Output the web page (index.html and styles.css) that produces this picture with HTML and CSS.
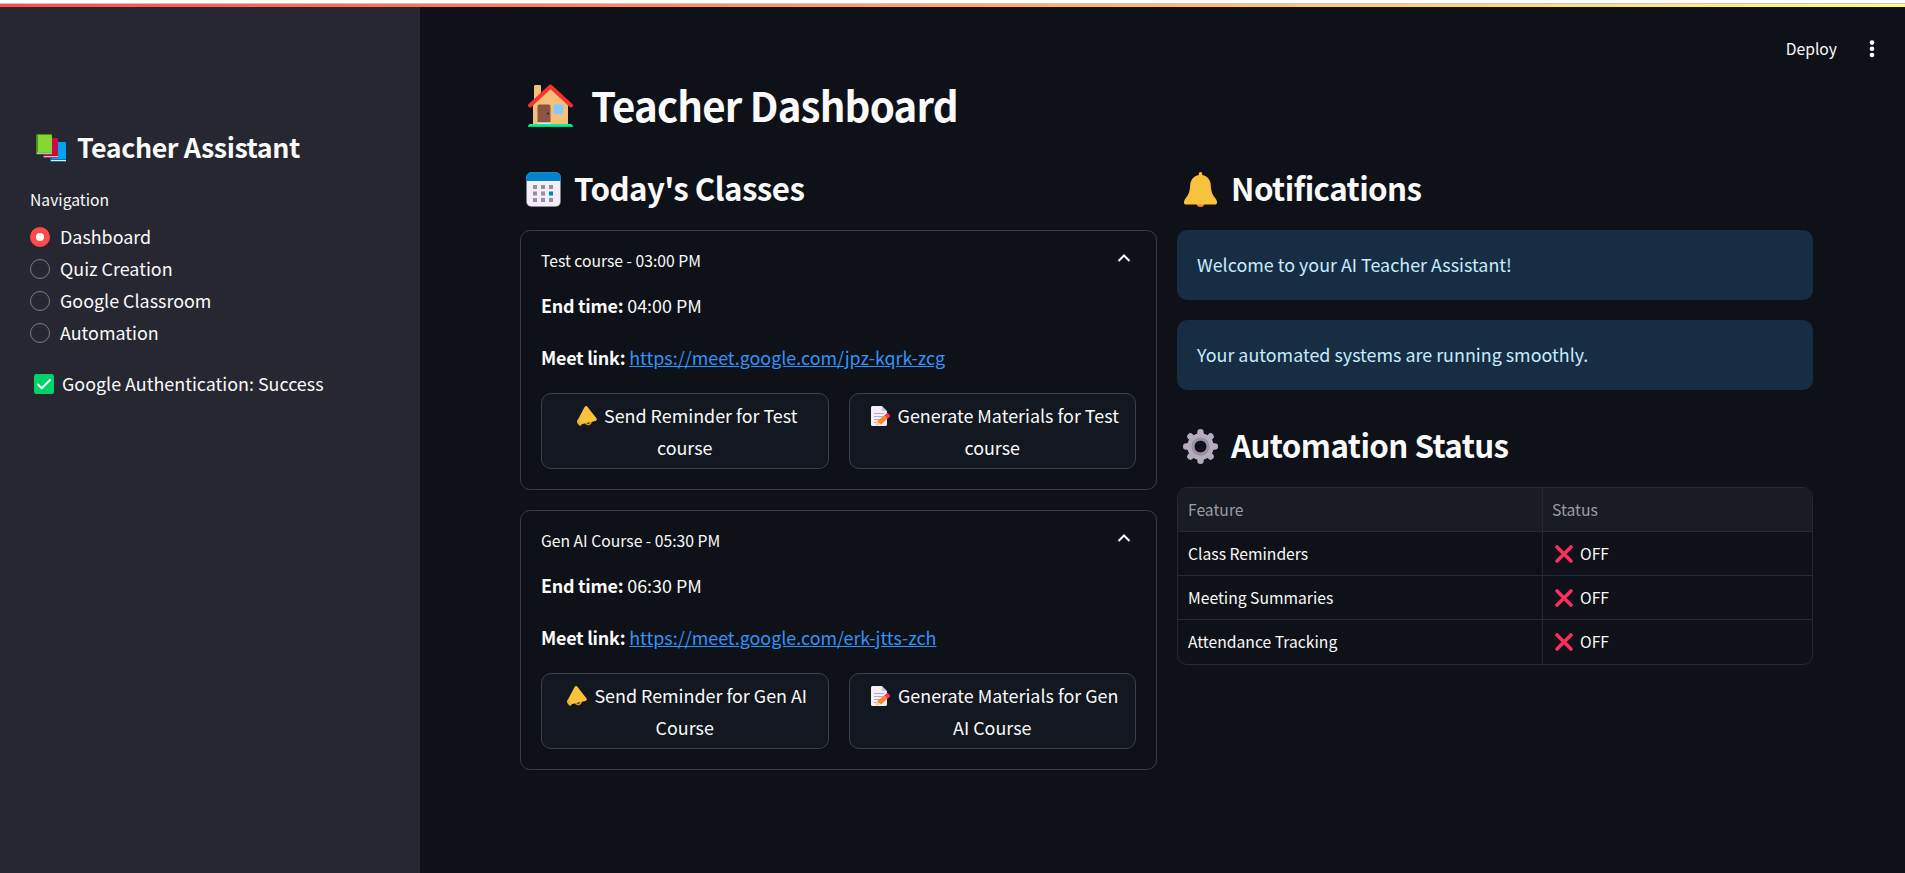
FILE: index.html
```html
<!DOCTYPE html>
<html lang="en">
<head>
<meta charset="utf-8">
<title>Teacher Dashboard</title>
<link rel="stylesheet" href="styles.css">
</head>
<body>
<svg width="0" height="0" class="defs" aria-hidden="true">
  <symbol id="megaphone" viewBox="0 0 20 20">
    <path d="M8.500 16.500c.8 2.600 3.600 2.500 4.800.9 1.100-1.500 1.300-2.800.4-3.900" fill="none" stroke="#d99a1e" stroke-width="1.700"/>
    <path d="M7.700.8c.8-1.100 2.200-1 2.900.1l8.800 11.300c.9 1.200.3 2.500-1.100 2.800L4.300 18.300.9 13.700z" fill="#f9c23c"/>
    <path d="M1 13.200l3.800 5.300c-.8 1.500-2.300 1.500-3 .5L.5 17.200c-.8-1.300-.6-3 .5-4z" fill="#f0b232"/>
  </symbol>
  <symbol id="memo" viewBox="0 0 20 20">
    <path d="M1.500 0h9.300L16 5.200V18.500a1.500 1.500 0 0 1-1.500 1.500h-13A1.500 1.500 0 0 1 0 18.500v-17A1.500 1.500 0 0 1 1.500 0z" fill="#f3eef8"/>
    <path d="M10.800 0 16 5.200h-3.700a1.500 1.500 0 0 1-1.500-1.500z" fill="#cdc4d6"/>
    <path d="M3 7.500h10M3 10.500h10M3 13.500h6M3 16.500h3" stroke="#b4acbc" stroke-width="1"/>
    <path d="M13.500 9.300l3.200 3.300-6.700 6-4-3.300z" fill="#ff822d"/>
    <path d="M13.500 9.300l2-1.900c.6-.6 1.300-.5 1.800 0l1.500 1.600c.5.600.5 1.200 0 1.700l-2.100 1.900z" fill="#f92f60"/>
    <path d="M5.700 15l3.500 3.500-4.500 1z" fill="#ffce7c"/>
  </symbol>
  <symbol id="cross" viewBox="0 0 18 18">
    <path d="M2 2l14 14M16 2L2 16" stroke="#f92f60" stroke-width="3.600" stroke-linecap="round"/>
  </symbol>
  <symbol id="chevron" viewBox="0 0 14 10">
    <path d="M1.500 8 7 2.500 12.500 8" fill="none" stroke="#fafafa" stroke-width="2.100"/>
  </symbol>
</svg>

<div class="strip"></div>
<div class="app">
  <aside class="sidebar">
    <h2 class="brand">
      <svg class="brand-icon" viewBox="0 0 30 28">
        <path d="M16 8h12.500c1 0 1.500.5 1.500 1.500V28H15.500c-1 0-1.500-.7-1.500-1.500z" fill="#0074ba"/>
        <path d="M17 8h11.500c1 0 1.500.5 1.500 1.500V25H16z" fill="#00a6ed"/>
        <path d="M15 26h15v1H15z" fill="#f3eef8"/>
        <path d="M8 4h12.500c1 0 1.500.5 1.500 1.500V24H8z" fill="#990838"/>
        <path d="M9 4h11.500c1 0 1.500.5 1.500 1.500V21.500H8z" fill="#ca0b4a"/>
        <path d="M7.500 22.200H22v1H7.500z" fill="#f3eef8"/>
        <path d="M1.500 0H14.500c1 0 1.500.5 1.500 1.500V20.500H1.500C.5 20.500 0 20 0 19V1.500C0 .5.500 0 1.500 0z" fill="#44911b"/>
        <path d="M2 1h12.500c1 0 1.500.3 1.500 1V18H2z" fill="#86d72f"/>
        <path d="M1 18.600h15v1H1z" fill="#f3eef8"/>
      </svg>
      <span>Teacher Assistant</span>
    </h2>
    <div class="nav-label">Navigation</div>
    <nav class="nav">
      <a class="option"><i class="radio on"></i><span>Dashboard</span></a>
      <a class="option"><i class="radio"></i><span>Quiz Creation</span></a>
      <a class="option"><i class="radio"></i><span>Google Classroom</span></a>
      <a class="option"><i class="radio"></i><span>Automation</span></a>
    </nav>
    <p class="auth">
      <svg class="check" viewBox="0 0 20 20"><rect width="20" height="20" rx="2.500" fill="#00d26a"/><path d="M4 10.500l3.700 3.700L16 6" fill="none" stroke="#fff" stroke-width="2" stroke-linecap="round" stroke-linejoin="round"/></svg>
      <span>Google Authentication: Success</span>
    </p>
  </aside>

  <main class="main">
    <header class="toolbar">
      <span>Deploy</span>
      <svg class="dots" viewBox="0 0 6 18"><circle cx="3" cy="2.600" r="2.300"/><circle cx="3" cy="8.800" r="2.300"/><circle cx="3" cy="15" r="2.300"/></svg>
    </header>

    <h1 class="title">
      <svg class="house" viewBox="0 0 45 44">
        <path d="M7 1.500h5.500V14H7z" fill="#e7ad6a"/>
        <path d="M6 2.500C6 1.500 6.500 1 7.500 1H12c.7 0 1 .5 1 1.500V18H6z" fill="#f3c07b"/>
        <path d="M22.500 4 40 20.500V41H5V20.500z" fill="#f3c07b"/>
        <path d="M9.500 22.500c0-1.300.7-2 2-2h9c1.300 0 2 .7 2 2V38.500h-13z" fill="#8c5543"/>
        <path d="M9 38.500h14V40H9z" fill="#e6e0e6"/>
        <circle cx="20" cy="29.500" r="1" fill="#321b41"/>
        <rect x="25.500" y="20.500" width="9.500" height="9.500" rx="1" fill="#83cbff"/>
        <path d="M2 21.500 22.500 2.500 43 21.500" fill="none" stroke="#f92f30" stroke-width="3.800" stroke-linecap="round" stroke-linejoin="round"/>
        <path d="M2.500 40H42.500c1.300 0 2.500 1.300 2.500 3H0c0-1.700 1.200-3 2.500-3z" fill="#00f397"/>
        <path d="M0 42h45v1H0z" fill="#00d26a"/>
      </svg>
      <span>Teacher Dashboard</span>
    </h1>

    <div class="columns">
      <section class="column">
        <h2 class="heading">
          <svg class="h-icon" viewBox="0 0 35 35">
            <rect x=".3" y=".3" width="34.400" height="34.400" rx="5" fill="#b4acbc"/>
            <path d="M1 8.500h33V29.500a4.500 4.500 0 0 1-4.500 4.500h-24A4.500 4.500 0 0 1 1 29.500z" fill="#f3eef8"/>
            <path d="M.3 9V5.300a5 5 0 0 1 5-5h24.400a5 5 0 0 1 5 5V9z" fill="#0084ce"/>
            <path d="M7 13h4v4H7zm8 0h4v4h-4zm8 0h4v4h-4zM7 19.500h4v4H7zm8 0h4v4h-4zM7 26h4v4H7zm8 0h4v4h-4zm8 0h4v4h-4z" fill="#998ea4"/>
            <path d="M23 19.500h4v4h-4z" fill="#0084ce"/>
          </svg>
          <span>Today's Classes</span>
        </h2>
        <article class="card">
          <div class="summary"><span>Test course - 03:00 PM</span><svg class="chev"><use href="#chevron"/></svg></div>
          <p class="line"><b>End time:</b> 04:00 PM</p>
          <p class="line"><b>Meet link:</b> <a class="link">https://meet.google.com/jpz-kqrk-zcg</a></p>
          <div class="actions">
            <button class="btn"><svg class="emoji"><use href="#megaphone"/></svg>Send Reminder for Test<br>course</button>
            <button class="btn"><svg class="emoji"><use href="#memo"/></svg>Generate Materials for Test<br>course</button>
          </div>
        </article>
        <article class="card">
          <div class="summary"><span>Gen AI Course - 05:30 PM</span><svg class="chev"><use href="#chevron"/></svg></div>
          <p class="line"><b>End time:</b> 06:30 PM</p>
          <p class="line"><b>Meet link:</b> <a class="link">https://meet.google.com/erk-jtts-zch</a></p>
          <div class="actions">
            <button class="btn"><svg class="emoji"><use href="#megaphone"/></svg>Send Reminder for Gen AI<br>Course</button>
            <button class="btn"><svg class="emoji"><use href="#memo"/></svg>Generate Materials for Gen<br>AI Course</button>
          </div>
        </article>
      </section>

      <section class="column">
        <h2 class="heading">
          <svg class="h-icon" viewBox="0 0 35 35">
            <circle cx="17.500" cy="31" r="4" fill="#ff822d"/>
            <path d="M17.500 0c1 0 1.700.8 1.700 1.700V3c5.200 1 8.300 5 8.600 10 .3 5.500 1 9 4.700 13.500 1 1.200 1.500 2.500 1.500 4 0 1.500-.8 2-2 2H3c-1.200 0-2-.5-2-2 0-1.500.5-2.800 1.500-4C6.200 22 6.900 18.500 7.200 13c.3-5 3.400-9 8.600-10V1.700C15.800.8 16.500 0 17.500 0z" fill="#f9c23c"/>
          </svg>
          <span>Notifications</span>
        </h2>
        <div class="alert">Welcome to your AI Teacher Assistant!</div>
        <div class="alert">Your automated systems are running smoothly.</div>
        <h2 class="heading status-heading">
          <svg class="h-icon" viewBox="-17.500 -17.500 35 35">
            <g stroke="#b4acbc" stroke-width="6.400" stroke-linecap="round">
              <path d="M0-14.300V-10M0 14.300V10M-14.300 0H-10M14.300 0H10M-10.100-10.100-8-8M10.100 10.100 8 8M-10.100 10.100-8 8M10.100-10.100 8-8"/>
            </g>
            <circle r="9.800" fill="none" stroke="#b4acbc" stroke-width="7"/>
            <circle r="7.600" fill="none" stroke="#998ea4" stroke-width="3"/>
          </svg>
          <span>Automation Status</span>
        </h2>
        <div class="table">
          <div class="row head"><div>Feature</div><div>Status</div></div>
          <div class="row"><div>Class Reminders</div><div><svg class="x"><use href="#cross"/></svg>OFF</div></div>
          <div class="row"><div>Meeting Summaries</div><div><svg class="x"><use href="#cross"/></svg>OFF</div></div>
          <div class="row"><div>Attendance Tracking</div><div><svg class="x"><use href="#cross"/></svg>OFF</div></div>
        </div>
      </section>
    </div>
  </main>
</div>
</body>
</html>
```
FILE: styles.css
```css
* { box-sizing: border-box; }
body {
  margin: 0;
  height: 873px;
  overflow: hidden;
  background: #fff;
  color: #fafafa;
  font-family: "Noto Sans CJK SC", "Noto Sans", sans-serif;
  font-size: 17.9px;
  line-height: 32px;
}
h1, h2, p { margin: 0; }
h1, h2 { letter-spacing: -0.018em; }
svg { display: block; flex: none; }
.defs { position: absolute; }

.strip {
  height: 7px;
  border-top: 3px solid #fff;
  background: linear-gradient(#c3c3cc 0 1px, transparent 1px), linear-gradient(90deg, #ff4b4b, #fffd80);
}
.app { display: flex; height: 866px; background: #0e1117; }

.sidebar { width: 420px; flex: none; background: #262730; padding: 123px 30px 0; }
.brand { display: flex; align-items: center; height: 36px; font-size: 26.8px; line-height: 36px; padding-left: 6px; gap: 11px; letter-spacing: -0.016em; }
.brand-icon { width: 30px; height: 28px; }
.brand span, .title span, .heading span { padding-bottom: 2px; }
.nav-label { margin-top: 20px; font-size: 15.7px; line-height: 28px; }
.nav { margin-top: 7px; }
.option { display: flex; align-items: center; gap: 10px; height: 32px; }
.option span, .auth span { padding-bottom: 2px; }
.radio { width: 20px; height: 20px; border: 1px solid #797a82; border-radius: 50%; }
.radio.on { border: 6px solid #ff4b4b; background: #fafafa; }
.auth { display: flex; align-items: center; height: 32px; margin-top: 19px; padding-left: 4px; gap: 8px; }
.check { width: 20px; height: 20px; }

.main { flex: 1; padding: 0 92px 0 100px; }
.toolbar { display: flex; justify-content: flex-end; align-items: center; gap: 32px; height: 75px; padding-top: 9px; margin-right: -62px; font-size: 15.7px; line-height: 28px; }
.dots { width: 6px; height: 18px; fill: #fafafa; }

.title { display: flex; align-items: center; height: 48px; gap: 18px; padding-left: 8px; font-size: 40.2px; line-height: 48px; letter-spacing: -0.02em; }
.house { width: 45px; height: 44px; }
.columns { display: grid; grid-template-columns: 637px 636px; gap: 20px; margin-top: 38px; }
.column { display: flex; flex-direction: column; }
.heading { display: flex; align-items: center; height: 42px; gap: 13px; padding-left: 6px; margin-bottom: 20px; font-size: 31.3px; line-height: 42px; }
.h-icon { width: 35px; height: 35px; }

.card { height: 260px; margin-bottom: 20px; padding: 0 20px; border: 1px solid #3a3c43; border-radius: 10px; }
.summary { display: flex; justify-content: space-between; align-items: center; height: 58px; font-size: 15.7px; padding: 1px 5px 0 0; }
.chev { width: 14px; height: 10px; margin-bottom: 6px; }
.line { height: 32px; margin-bottom: 20px; white-space: pre; }
.line b { letter-spacing: -0.25px; }
.link { color: #3293f8; text-decoration: underline; }
.actions { display: grid; grid-template-columns: 1fr 1fr; gap: 20px; }
.btn { height: 76px; padding: 0; border: 1px solid #3e4047; border-radius: 10px; background: #131720; color: inherit; font: inherit; white-space: nowrap; }
.emoji { display: inline-block; width: 20px; height: 20px; margin: 0 7px 0 5px; vertical-align: -3px; }

.alert { height: 70px; margin-bottom: 20px; padding: 18px 20px; border-radius: 10px; background: #172d43; color: #c7ebff; }
.status-heading { margin-top: 15px; }
.table { height: 178px; border: 1px solid #262930; border-radius: 10px; overflow: hidden; font-size: 15.7px; }
.row { display: grid; grid-template-columns: 365px 1fr; height: 44px; border-bottom: 1px solid #262930; }
.row:last-child { border-bottom: 0; }
.row > div { display: flex; align-items: center; padding: 0 10px; }
.row > div:first-child { border-right: 1px solid #262930; }
.row > div:last-child { padding-left: 9px; }
.head { background: #1a1c24; color: #9b9ca2; }
.x { width: 18px; height: 18px; margin: 0 7px 0 3px; }
```
